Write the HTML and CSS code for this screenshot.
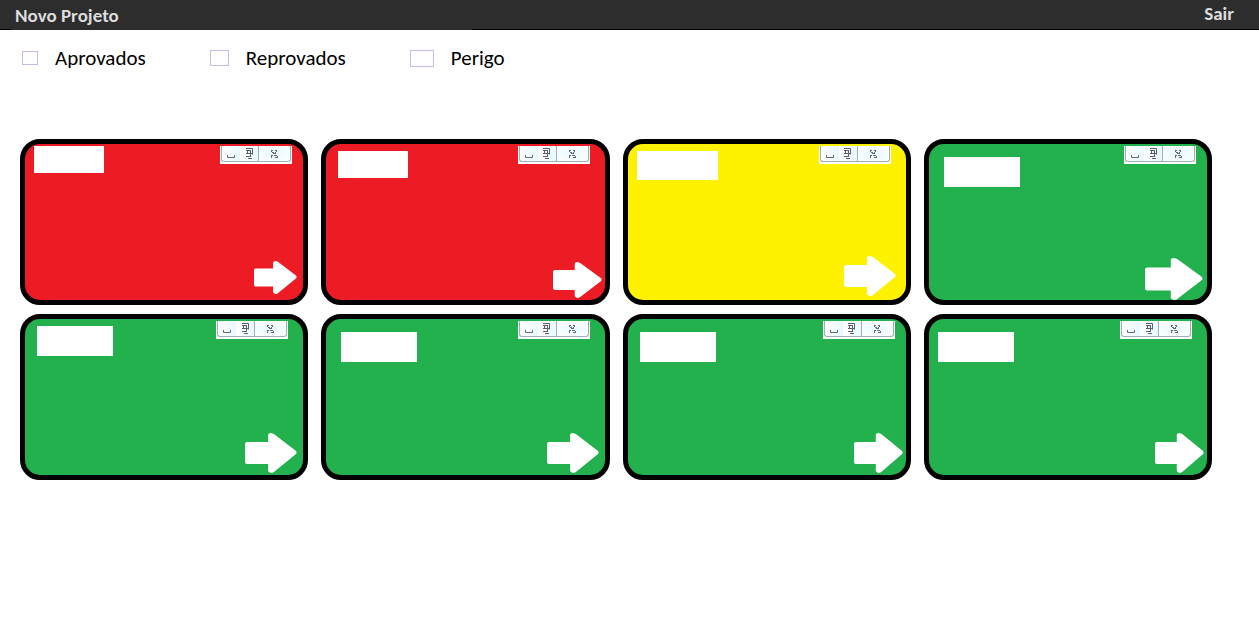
FILE: index.html
```html
<!DOCTYPE html>
<html lang="pt-BR">
<head>
<meta charset="utf-8">
<meta name="viewport" content="width=device-width, initial-scale=1">
<title>Projetos</title>
<link rel="stylesheet" href="styles.css">
</head>
<body>
<header class="topbar">
  <a class="topbar-link" href="#novo">Novo Projeto</a>
  <a class="topbar-link topbar-exit" href="#sair">Sair</a>
</header>
<form class="filters">
  <label class="filter"><input class="check check-small" type="checkbox">Aprovados</label>
  <label class="filter"><input class="check check-medium" type="checkbox">Reprovados</label>
  <label class="filter"><input class="check check-large" type="checkbox">Perigo</label>
</form>
<main class="board" id="board"></main>
<template id="card-template">
  <article class="card">
    <div class="card-head">
      <input class="card-name" type="text" aria-label="Nome do projeto">
      <div class="controls">
        <button class="control" type="button" aria-label="Minimizar"><svg width="8" height="8" viewBox="0 0 8 8"><path d="M.5 5v2.500h7V5" fill="none" stroke="#6a6775"/></svg></button>
        <button class="control" type="button" aria-label="Restaurar"><svg width="7" height="11" viewBox="0 0 7 11"><path d="M0 .5h6.500v6M0 2.500h5M0 5.500h7M4.500 2v4M1.500 3v3M0 8.500h5M4.500 6v3M2 10.500h4" fill="none" stroke="#5f5c6a"/></svg></button>
        <button class="control control-close" type="button" aria-label="Fechar"><svg width="7" height="8" viewBox="0 0 7 8"><path d="M0 .5h2M4 .5h2M1 2.500h2M4 2.500h1M2 3.500h3M0 5.500h2M3 5.500h3M0 7.500h1M4 7.500h3M.5 0v2M5.500 0v2M.5 5v3M6.500 6v2" fill="none" stroke="#6a6775"/></svg></button>
      </div>
    </div>
    <button class="go" type="button" aria-label="Abrir projeto"><svg class="go-icon" viewBox="0 0 54 40" preserveAspectRatio="none"><path d="M2 9H24V2Q24 0 27 0L30 1L53 18Q54 20 53 21L30 39Q27 41 25 39L24 38V31H2Q0 31 0 29V11Q0 9 2 9Z" fill="#fff"/></svg></button>
  </article>
</template>
<script src="board.js"></script>
</body>
</html>
```
FILE: styles.css
```css
* { box-sizing: border-box; }
body {
  margin: 0;
  background: #fff;
  color: #000;
  font-family: Carlito, Calibri, Lato, sans-serif;
}
.topbar {
  display: flex;
  justify-content: space-between;
  height: 30px;
  padding: 4px 25px 0 15px;
  background:
    linear-gradient(#2d2d2d, #2d2d2d) 0 0 / 100% 29px no-repeat,
    linear-gradient(#2d2d2d, #2d2d2d) 11px 29px / 461px 1px no-repeat,
    #000;
}
.topbar-link {
  color: #dcdcdc;
  font-size: 19px;
  font-weight: 700;
  line-height: 24px;
  text-decoration: none;
}
.topbar-exit { line-height: 20px; }
.filters {
  display: flex;
  gap: 64px;
  padding: 16px 22px 0;
}
.filter {
  display: flex;
  align-items: center;
  gap: 17px;
  font-size: 21px;
  line-height: 24px;
}
.check {
  appearance: none;
  margin: 0;
  border: 1px solid #c4bfe6;
  background: #fff;
}
.check:checked { background: #c4bfe6; }
.check-small { width: 16px; height: 14px; }
.check-medium { width: 19px; height: 16px; }
.check-large { width: 24px; height: 17px; }
.board {
  display: grid;
  grid-template-columns: repeat(4, 1fr);
  gap: 9px 13px;
  padding: 69px 47px 24px 20px;
}
.card {
  --name-left: 12px;
  --name-top: 11px;
  --tools-right: 15px;
  display: flex;
  flex-direction: column;
  justify-content: space-between;
  min-height: 166px;
  border: 5px solid #000;
  border-radius: 20px;
  background: #22b14c;
}
.danger { background: #ed1c24; }
.warning { background: #fff200; }
.name-high { --name-top: 5px; }
.name-flush { --name-top: 0px; }
.name-near { --name-left: 9px; }
.name-far { --name-left: 15px; }
.tools-edge { --tools-right: 11px; }
.card-head {
  display: flex;
  align-items: flex-start;
  justify-content: space-between;
  padding: 2px var(--tools-right) 0 var(--name-left);
}
.card-name {
  width: 76px;
  height: 30px;
  margin: var(--name-top) 0 0;
  padding: 0 4px;
  border: 0;
  background: #fff;
  font: inherit;
}
.name-small .card-name { width: 70px; height: 27px; }
.name-wide .card-name { width: 81px; height: 29px; }
.controls {
  display: flex;
  width: 72px;
  height: 18px;
  padding: 0 1px 2px;
  background: #fff;
}
.control {
  display: flex;
  align-items: center;
  justify-content: center;
  width: 18px;
  padding: 0;
  border: 0 solid #9fb1b3;
  border-bottom-width: 1px;
  background: linear-gradient(90deg, #fff, #e6f9ff);
}
.control:first-child {
  width: 19px;
  border-left-width: 1px;
  border-bottom-left-radius: 3px;
}
.control-close {
  width: 33px;
  border-width: 0 1px 1px;
  border-bottom-right-radius: 3px;
  background: radial-gradient(#e6f9ff, #fff);
}
.go {
  display: block;
  align-self: flex-end;
  width: 52px;
  height: 40px;
  margin: 0 6px 2px 0;
  padding: 0;
  border: 0;
  background: none;
}
.go-icon {
  display: block;
  width: 100%;
  height: 100%;
}
.go-small .go { width: 43px; height: 33px; margin-bottom: 6px; }
.go-medium .go { width: 49px; height: 36px; margin-right: 3px; }
.go-large .go { width: 58px; height: 42px; margin: 0 4px 0 0; }
.go-inset .go { margin: 0 10px 4px 0; }
.go-edge .go { width: 49px; margin-right: 3px; }
```
FILE: board.js
```js
const cards = [
  "danger name-small name-near name-flush tools-edge go-small",
  "danger name-small name-high go-medium",
  "warning name-wide name-near name-high go-inset",
  "name-far tools-edge go-large",
  "name-high",
  "name-far",
  "tools-edge go-edge",
  "name-near go-edge"
];
const board = document.getElementById("board");
const template = document.getElementById("card-template");
for (const variant of cards) {
  const card = template.content.cloneNode(true).firstElementChild;
  card.classList.add(...variant.split(" "));
  board.append(card);
}
```
